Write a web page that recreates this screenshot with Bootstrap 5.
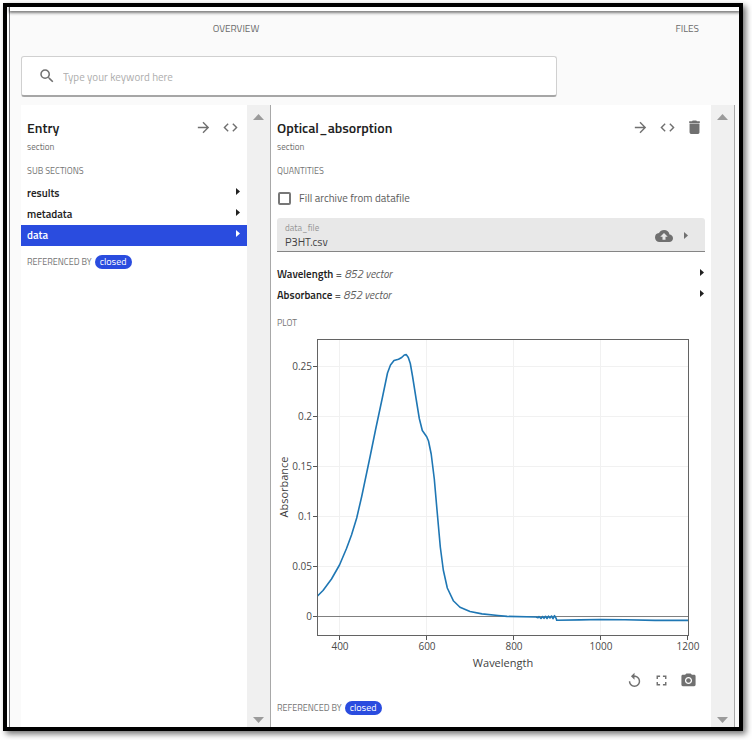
<!DOCTYPE html>
<html lang="en">
<head>
<meta charset="utf-8">
<meta name="viewport" content="width=device-width, initial-scale=1">
<title>Archive – Optical_absorption</title>
<link href="https://cdn.jsdelivr.net/npm/bootstrap@5.3.0/dist/css/bootstrap.min.css" rel="stylesheet">
<style>
body { font-family: "Titillium Web", Roboto, "Liberation Sans", sans-serif; font-size: 11px; line-height: 12px; color: #212121; padding: 3px 9px 9px 3px; }
.window-frame { border: 4px solid #000; box-shadow: 3px 3px 6px rgba(0,0,0,.55); padding-left: 2px; background: #fff; }
.page-area { border-left: 1px solid #77777b; background: #fafafa; }
.top-strip { height: 4px; background: #fff; box-shadow: 0 1px 3px 1px rgba(0,0,0,.5); }
.tab-bar { height: 35px; overflow: hidden; }
.tab-bar a { color: #6b6b6b; text-decoration: none; font-size: 10px; }
.tab-main { width: 62%; }
.tab-files { padding-right: 40px; }
.main-body { padding: 10px 4px 0 11px; }
.search-box { height: 41px; border: 1px solid #d0d0d0; border-bottom: 2px solid #a6a6a6; border-radius: 3px; background: #fff; padding-left: 16px; gap: 7px; }
.search-box input { font-size: 11px; line-height: 20px; height: 22px; margin-top: 2px; outline: 0; }
.search-box input::placeholder { color: #adadad; opacity: 1; }
.lanes { margin-top: 8px; }
.lane { border-right: 1px solid #a8a8a8; }
.lane-left { flex: 0 0 250px; }
.lane-content { background: #fff; padding-top: 9px; }
.inset { padding-left: 6px; padding-right: 6px; }
.scroll-track { flex: 0 0 23px; background: #f0f0f0; padding: 9px 0 4px; }
.lane-head { height: 27px; }
.lane-head h1 { font-size: 14px; line-height: 20px; font-weight: 600; }
.head-tools { gap: 10px; padding-right: 2px; }
.icon-btn { border: 0; background: none; padding: 0; display: flex; color: #707070; }
.icon-btn svg, .search-box svg { fill: currentColor; }
.caption-text { font-size: 9px; color: #707070; }
.group-label { font-size: 9px; color: #757575; margin-top: 12px; }
.item-row { height: 21px; color: #212121; text-decoration: none; font-weight: 600; line-height: 18px; padding-bottom: 1px; }
.item-row.current { background: #2a4cdf; color: #fff; }
.item-row svg { fill: currentColor; margin: 0 1px 3px 0; }
.item-row em, .item-row .eq { font-weight: 400; color: #5c5c5c; }
.left-items { margin-top: 6px; }
.right-items { margin-top: 12px; }
.ref-row { font-size: 9px; color: #757575; gap: 3px; }
.ref-left { margin-top: 9px; }
.ref-right { margin-top: 13px; }
.pill-link { background: #2a4cdf; color: #fff; font-size: 10px; line-height: 13px; height: 14px; text-decoration: none; padding: 0 5px; }
.fill-row { height: 20px; margin-top: 11px; gap: 8px; padding-left: 1px; color: #5c5c5c; }
.fill-row input { appearance: none; width: 13px; height: 13px; border: 2px solid #777; border-radius: 2px; margin: 0; background: #fff; }
.fill-row input:checked { background: #2a4cdf; border-color: #2a4cdf; }
.file-field { height: 34px; margin-top: 10px; background: #e8e8e8; border-bottom: 1px solid #858585; border-radius: 3px 3px 0 0; padding: 3px 17px 1px 8px; gap: 11px; }
.file-field label { font-size: 9px; color: #949494; }
.file-field input { font-size: 11px; line-height: 16px; color: #424242; outline: 0; }
.plot-label { margin-top: 11px; }
.plot-svg text { font-family: "Open Sans", "Noto Sans", sans-serif; font-size: 10px; fill: #4a4a4a; }
.plot-svg .axis-title { font-size: 11px; fill: #3f3f3f; }
.plot-tools { gap: 10px; padding-right: 8px; height: 16px; }
</style>
</head>
<body class="min-vh-100 d-flex flex-column">
<svg class="d-none" aria-hidden="true">
  <symbol id="arrow" viewBox="0 0 24 24"><path d="M12 4l-1.400 1.400L16.200 11H4v2h12.200l-5.600 5.600L12 20l8-8z"/></symbol>
  <symbol id="code" viewBox="0 0 24 24"><path d="M9.400 16.600L4.800 12l4.600-4.600L8 6l-6 6 6 6zm5.200 0l4.600-4.600-4.600-4.600L16 6l6 6-6 6z"/></symbol>
  <symbol id="caret" viewBox="0 0 4 7"><path d="M0 0l4 3.500L0 7z"/></symbol>
</svg>
<div class="window-frame flex-grow-1 d-flex">
  <div class="page-area flex-grow-1 d-flex flex-column">
    <div class="top-strip"></div>
    <nav class="tab-bar d-flex align-items-center" aria-label="Entry pages">
      <div class="tab-main text-center"><a href="#overview">OVERVIEW</a></div>
      <div class="tab-files flex-grow-1 text-end"><a href="#files">FILES</a></div>
    </nav>
    <main class="main-body flex-grow-1 d-flex flex-column">
      <form class="search-box w-75 d-flex align-items-center" role="search">
        <label class="d-flex" for="keyword" aria-label="Keyword"><svg width="18" height="18" viewBox="0 0 24 24" color="#707070"><path d="M15.500 14h-.79l-.28-.27A6.470 6.470 0 0 0 16 9.500 6.500 6.500 0 1 0 9.500 16c1.610 0 3.090-.59 4.230-1.570l.27.28v.79l5 4.990L20.490 19l-4.990-5zm-6 0C7.010 14 5 11.990 5 9.500S7.010 5 9.500 5 14 7.010 14 9.500 11.990 14 9.500 14z"/></svg></label>
        <input id="keyword" class="border-0 bg-transparent p-0 flex-grow-1" type="text" aria-label="Keyword" placeholder="Type your keyword here">
      </form>

      <div class="lanes d-flex flex-grow-1">
        <section class="lane lane-left d-flex">
          <div class="lane-content flex-grow-1">
            <div class="lane-head inset d-flex align-items-center justify-content-between">
              <h1 class="m-0">Entry</h1>
              <div class="head-tools d-flex">
                <button class="icon-btn" type="button" aria-label="Open"><svg width="17" height="17"><use href="#arrow"/></svg></button>
                <button class="icon-btn" type="button" aria-label="Source"><svg width="17" height="17"><use href="#code"/></svg></button>
              </div>
            </div>
            <div class="caption-text inset">section</div>
            <div class="group-label inset">SUB SECTIONS</div>
            <nav class="left-items" aria-label="Sub sections">
              <a class="item-row inset d-flex align-items-center justify-content-between" href="#results"><span>results</span><svg width="4" height="7"><use href="#caret"/></svg></a>
              <a class="item-row inset d-flex align-items-center justify-content-between" href="#metadata"><span>metadata</span><svg width="4" height="7"><use href="#caret"/></svg></a>
              <a class="item-row current inset d-flex align-items-center justify-content-between" href="#data" aria-current="true"><span>data</span><svg width="4" height="7"><use href="#caret"/></svg></a>
            </nav>
            <div class="ref-row ref-left inset d-flex align-items-center"><span>REFERENCED BY</span><a class="pill-link rounded-pill" href="#refs">closed</a></div>
          </div>
          <div class="scroll-track d-flex flex-column justify-content-between align-items-center" aria-hidden="true">
            <svg width="11" height="6" fill="#9b9b9b"><path d="M0 6L5.500 0 11 6z"/></svg>
            <svg width="11" height="6" fill="#9b9b9b"><path d="M0 0h11L5.500 6z"/></svg>
          </div>
        </section>

        <section class="lane d-flex flex-grow-1">
          <div class="lane-content inset flex-grow-1">
            <div class="lane-head d-flex align-items-center justify-content-between">
              <h1 class="m-0">Optical_absorption</h1>
              <div class="head-tools d-flex">
                <button class="icon-btn" type="button" aria-label="Open"><svg width="17" height="17"><use href="#arrow"/></svg></button>
                <button class="icon-btn" type="button" aria-label="Source"><svg width="17" height="17"><use href="#code"/></svg></button>
                <button class="icon-btn" type="button" aria-label="Delete"><svg width="17" height="17" viewBox="0 0 24 24"><path d="M5 18.500C5 19.900 5.900 21 7 21h10c1.100 0 2-.9 2-2V6.500H5zM19.500 3H15.500l-1-1h-5l-1 1h-4v2.500h15z"/></svg></button>
              </div>
            </div>
            <div class="caption-text">section</div>
            <div class="group-label">QUANTITIES</div>
            <div class="fill-row d-flex align-items-center"><input id="fill" type="checkbox"><label for="fill">Fill archive from datafile</label></div>
            <div class="file-field d-flex align-items-center">
              <div class="flex-grow-1 d-flex flex-column">
                <label for="datafile">data_file</label>
                <input id="datafile" class="border-0 bg-transparent p-0" type="text" value="P3HT.csv">
              </div>
              <button class="icon-btn" type="button" aria-label="Upload"><svg width="18" height="18" viewBox="0 0 24 24"><path d="M19.350 10.040A7.490 7.490 0 0 0 12 4C9.110 4 6.600 5.640 5.350 8.040A5.990 5.990 0 0 0 0 14c0 3.310 2.690 6 6 6h13c2.760 0 5-2.240 5-5 0-2.640-2.050-4.780-4.650-4.960zM14 13v4h-4v-4H7l5-5 5 5z"/></svg></button>
              <button class="icon-btn" type="button" aria-label="Open file"><svg width="4" height="7"><use href="#caret"/></svg></button>
            </div>
            <nav class="right-items" aria-label="Quantities">
              <a class="item-row d-flex align-items-center justify-content-between" href="#wavelength"><span>Wavelength <span class="eq">=</span> <em>852 vector</em></span><svg width="4" height="7"><use href="#caret"/></svg></a>
              <a class="item-row d-flex align-items-center justify-content-between" href="#absorbance"><span>Absorbance <span class="eq">=</span> <em>852 vector</em></span><svg width="4" height="7"><use href="#caret"/></svg></a>
            </nav>
            <div class="group-label plot-label">PLOT</div>
            <svg class="plot-svg w-100 d-block" viewBox="277 329 428 343" role="img" aria-label="Absorbance against wavelength">
              <g stroke="#f1f1f1" fill="none">
                <path d="M339.500 340v295M426.500 340v295M513.500 340v295M600.500 340v295"/>
                <path d="M318 366.500h370M318 416.500h370M318 466.500h370M318 516.500h370M318 566.500h370"/>
              </g>
              <path d="M318 616.500h370" stroke="#808080"/>
              <path d="M317.500 596L323 590.500 331.500 579 339.500 565 346.500 548.500 351.500 535 356.700 518 361.700 496.500 370 457 375.500 430 382.300 398 387.500 373 390.500 365 394 360.500 398.500 359.200 401.700 357.500 404.300 355 406.300 354.600 408.300 357.500 410.300 363.500 412.500 376 416.300 400 419.300 418.500 422.300 430.500 426.700 436.700 428.500 441 431.200 454 434.300 479 437 510 440.300 547 443.300 570 447.300 588 453.300 600.700 460 607.300 470 611.500 482 613.900 498 615.500 507 616.400 536 617 538 617.800 539 616.600 541 618.500 542.500 616.500 544 618.300 545.500 616.300 547 618.500 548.500 616.200 550 618 551.500 616 553 618.700 554.500 615.700 556.200 618.500 556.700 620.200 580 619.900 600 619.500 625 619.700 655 620.400 688 620.400" fill="none" stroke="#1f77b4" stroke-width="1.600" stroke-linejoin="round"/>
              <rect x="317.500" y="339.500" width="371" height="296" fill="none" stroke="#636363"/>
              <path d="M339.500 636v4M426.500 636v4M513.500 636v4M600.500 636v4M687.500 636v4M313 366.500h4M313 416.500h4M313 466.500h4M313 516.500h4M313 566.500h4M313 616.500h4" stroke="#555"/>
              <g text-anchor="middle">
                <text x="340" y="650">400</text><text x="427" y="650">600</text><text x="514" y="650">800</text><text x="601" y="650">1000</text><text x="688" y="650">1200</text>
                <text class="axis-title" x="503" y="667">Wavelength</text>
                <text class="axis-title" transform="translate(288 487) rotate(-90)">Absorbance</text>
              </g>
              <g text-anchor="end">
                <text x="312" y="370">0.25</text><text x="312" y="420">0.2</text><text x="312" y="470">0.15</text><text x="312" y="520">0.1</text><text x="312" y="570">0.05</text><text x="312" y="620">0</text>
              </g>
            </svg>
            <div class="plot-tools d-flex justify-content-end align-items-center">
              <button class="icon-btn" type="button" aria-label="Reset"><svg width="17" height="17" viewBox="0 0 24 24"><path d="M12 5V1L7 6l5 5V7c3.310 0 6 2.690 6 6s-2.690 6-6 6-6-2.690-6-6H4c0 4.420 3.580 8 8 8s8-3.580 8-8-3.580-8-8-8z"/></svg></button>
              <button class="icon-btn" type="button" aria-label="Full screen"><svg width="17" height="17" viewBox="0 0 24 24"><path d="M7 14H5v5h5v-2H7zM5 10h2V7h3V5H5zM17 17h-3v2h5v-5h-2zM14 5v2h3v3h2V5z"/></svg></button>
              <button class="icon-btn" type="button" aria-label="Save image"><svg width="17" height="17" viewBox="0 0 24 24"><circle cx="12" cy="12" r="3.200"/><path d="M9 2L7.170 4H4c-1.100 0-2 .9-2 2v12c0 1.100.9 2 2 2h16c1.100 0 2-.9 2-2V6c0-1.100-.9-2-2-2h-3.170L15 2zm3 15c-2.760 0-5-2.240-5-5s2.240-5 5-5 5 2.240 5 5-2.240 5-5 5z"/></svg></button>
            </div>
            <div class="ref-row ref-right d-flex align-items-center"><span>REFERENCED BY</span><a class="pill-link rounded-pill" href="#refs2">closed</a></div>
          </div>
          <div class="scroll-track d-flex flex-column justify-content-between align-items-center" aria-hidden="true">
            <svg width="11" height="6" fill="#9b9b9b"><path d="M0 6L5.500 0 11 6z"/></svg>
            <svg width="11" height="6" fill="#9b9b9b"><path d="M0 0h11L5.500 6z"/></svg>
          </div>
        </section>
      </div>
    </main>
  </div>
</div>
<script src="https://cdn.jsdelivr.net/npm/bootstrap@5.3.0/dist/js/bootstrap.bundle.min.js"></script>
</body>
</html>
